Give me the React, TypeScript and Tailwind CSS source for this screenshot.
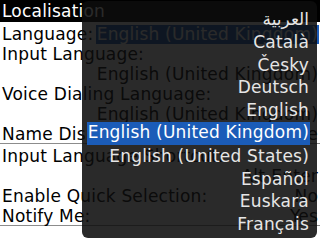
import React from 'react';

const languages = [
  'العربية',
  'Català',
  'Česky',
  'Deutsch',
  'English',
  'English (United Kingdom)',
  'English (United States)',
  'Español',
  'Euskara',
  'Français',
];

const selected = 'English (United Kingdom)';

export default function App() {
  return (
    <div className="relative w-[320px] h-[240px] overflow-hidden bg-white text-black text-[17px] tracking-[0.2px] font-['DejaVu_Sans',sans-serif]">
      <div className="h-[22px] leading-[22px] bg-black text-white pl-[2px]">Localisation</div>

      <div className="pt-[2px]">
        <div className="flex items-center h-[20px] leading-[20px] pl-[2px]">
          <span>Language:</span>
          <span className="ml-auto mr-[1px] px-[1px] bg-[#1b5cb8] text-white leading-[19px]">English (United Kingdom)</span>
        </div>
        <div className="h-[20px] leading-[20px] pl-[2px]">Input Language:</div>
        <div className="h-[20px] leading-[20px] pr-[2px] text-right">English (United Kingdom)</div>
        <div className="h-[20px] leading-[20px] pl-[2px]">Voice Dialing Language:</div>
        <div className="h-[20px] leading-[20px] pr-[2px] text-right">English (United Kingdom)</div>
        <div className="flex h-[20px] leading-[20px] px-[2px] border-b border-[#8c8c8c]">
          <span>Name Display:</span>
          <span className="ml-auto">First Name</span>
        </div>
        <div className="mt-[2px] h-[20px] leading-[20px] pl-[2px]">Input Language Shortcut:</div>
        <div className="h-[20px] leading-[20px] pr-[2px] text-right">Alt-Enter</div>
        <div className="flex h-[20px] leading-[20px] px-[2px]">
          <span>Enable Quick Selection:</span>
          <span className="ml-auto">No</span>
        </div>
        <div className="flex h-[20px] leading-[20px] px-[2px] border-b border-[#8c8c8c]">
          <span>Notify Me:</span>
          <span className="ml-auto">Yes</span>
        </div>
      </div>

      <div className="absolute left-[82px] top-[1px] w-[235px] h-[237px] rounded-[6px] bg-[rgba(13,13,13,0.88)] pt-[7px] pr-[7px] flex flex-col items-end">
        {languages.map((lang) => (
          <div
            key={lang}
            className={
              lang === selected
                ? 'h-[22.8px] leading-[21px] px-[1px] bg-[#1b5cb8] text-white'
                : 'h-[22.8px] leading-[23px] px-[1px] text-[#e6e6e6]'
            }
          >
            {lang}
          </div>
        ))}
      </div>
    </div>
  );
}
